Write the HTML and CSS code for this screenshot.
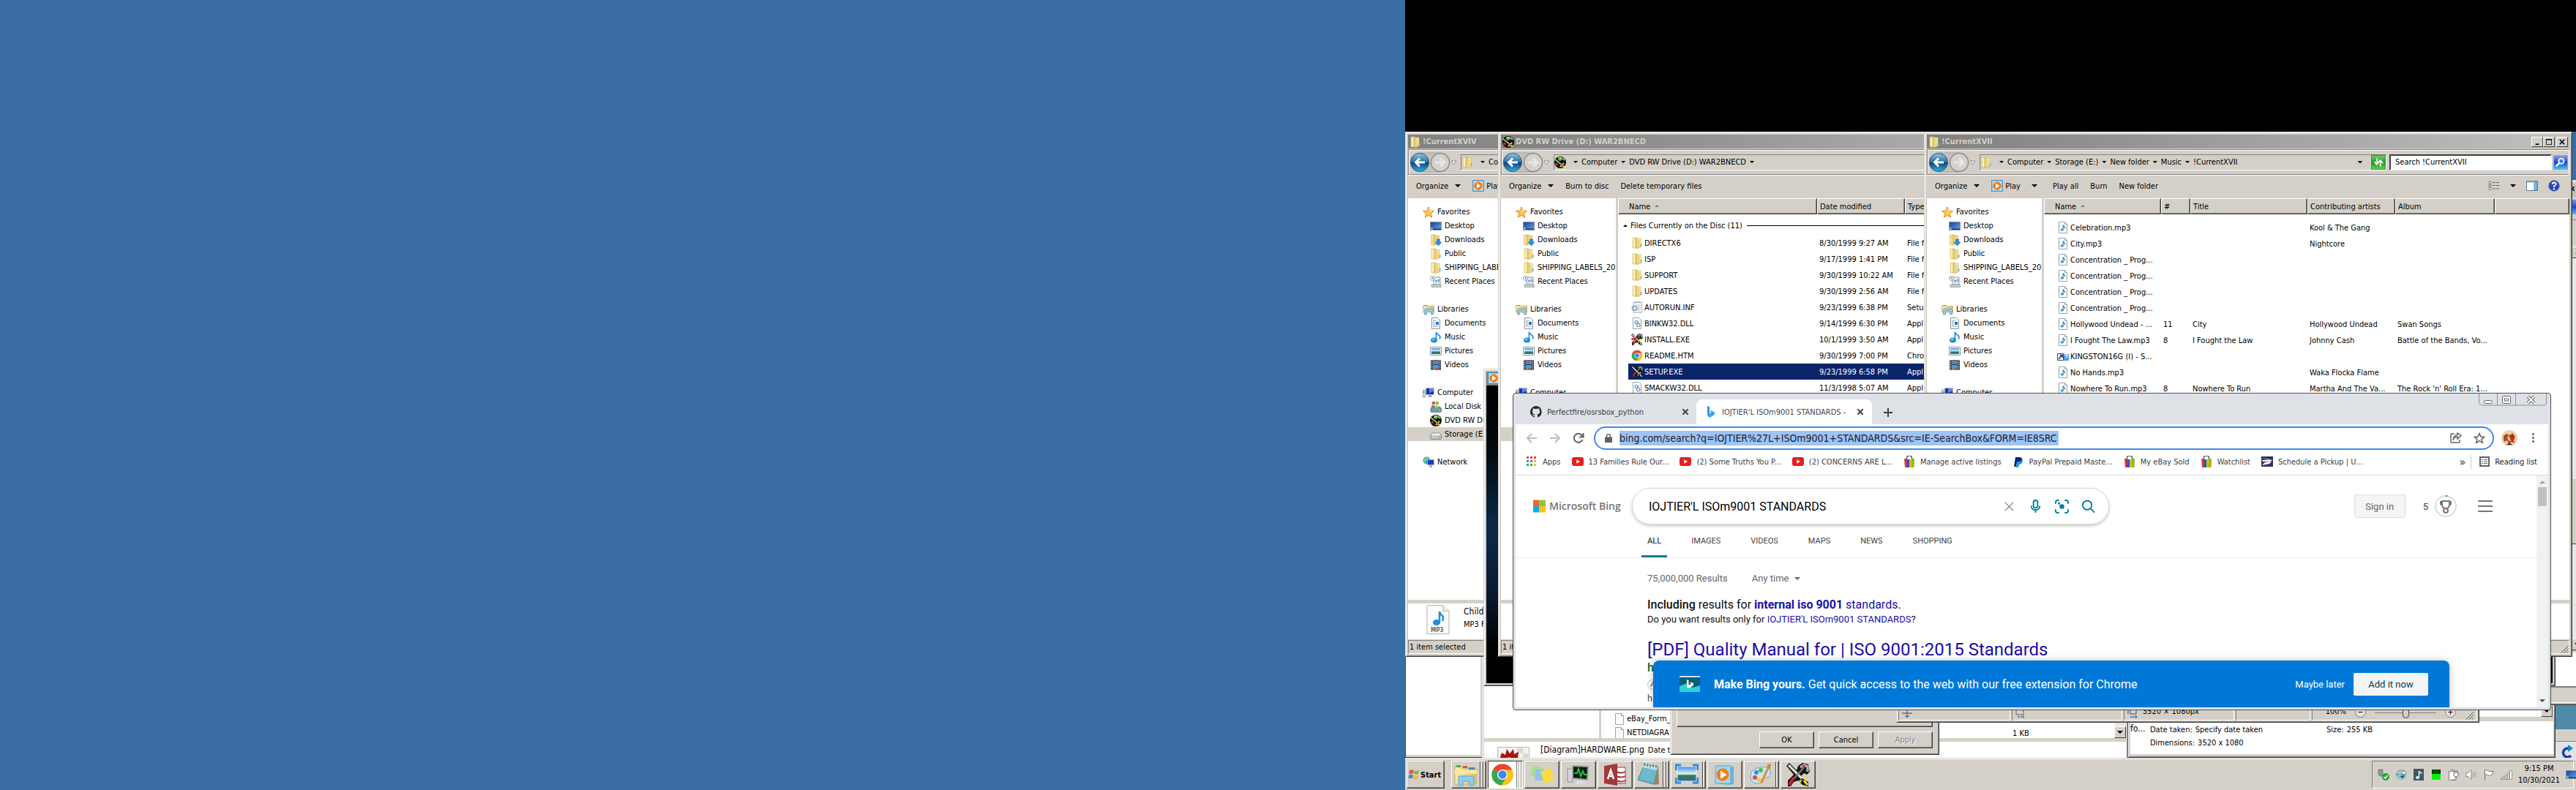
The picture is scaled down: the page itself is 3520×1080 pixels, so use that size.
FILE: index.html
```html
<!DOCTYPE html>
<html lang="en">
<head>
<meta charset="utf-8">
<title>Desktop</title>
<link rel="stylesheet" href="styles.css">
</head>
<body>
<svg class="sprite" aria-hidden="true">
  <defs>
    <linearGradient id="gFold" x1="0" x2="1"><stop offset="0" stop-color="#f8eba8"/><stop offset="1" stop-color="#dfc063"/></linearGradient>
    <linearGradient id="gBlue" x1="0" y1="0" x2="0" y2="1"><stop offset="0" stop-color="#8fc6e8"/><stop offset=".48" stop-color="#2f6fa3"/><stop offset=".5" stop-color="#0d3f70"/><stop offset="1" stop-color="#2fb4ea"/></linearGradient>
    <linearGradient id="gScr" x1="0" y1="0" x2="1" y2="1"><stop offset="0" stop-color="#123c9c"/><stop offset="1" stop-color="#6fa8ee"/></linearGradient>
    <linearGradient id="gSky" x1="0" y1="0" x2="0" y2="1"><stop offset="0" stop-color="#3b8ede"/><stop offset=".5" stop-color="#e6f4fb"/><stop offset=".6" stop-color="#3c7a4c"/><stop offset="1" stop-color="#2a6fa8"/></linearGradient>
  </defs>
  <symbol id="folder" viewBox="0 0 16 16"><path d="M2 1h6v14H2z" fill="url(#gFold)" stroke="#d2b45c" stroke-width=".6"/><path d="M7 2h6v12l-5 1.500H7z" fill="#ecd584" stroke="#cfae52" stroke-width=".6"/><path d="M4 2v12" stroke="#fffbe0" stroke-width="1.200"/><path d="M9 3h3v7" stroke="#f9efba" fill="none"/><path d="M13 9h1.500v4H13z" fill="#6db4e6"/></symbol>
  <symbol id="star" viewBox="0 0 16 16"><path d="M8 1l2 5 5.500.4-4.200 3.500 1.400 5.300L8 12.300l-4.700 2.900 1.400-5.300L.5 6.400 6 6z" fill="#fdc94a" stroke="#d9842b"/><path d="M8 3l1.300 3.800 3.700.3" stroke="#fff0a8" fill="none"/></symbol>
  <symbol id="desktop" viewBox="0 0 16 16"><path d="M.5 2.500h15v11H.5z" fill="url(#gScr)" stroke="#8793a0"/><path d="M1 11.500h14V13H1z" fill="#1e3f5c"/><circle cx="2.500" cy="11.500" r="1.500" fill="#8bd06a"/></symbol>
  <symbol id="download" viewBox="0 0 16 16"><path d="M1.500 1h6v14h-6z" fill="url(#gFold)" stroke="#d2b45c" stroke-width=".6"/><path d="M6.500 2h6v12h-6z" fill="#ecd584" stroke="#cfae52" stroke-width=".6"/><path d="M9.500 7h4v4H16l-4.500 5L7 11h2.500z" fill="#2d8fdf" stroke="#1a6bb5" stroke-width=".6"/></symbol>
  <symbol id="recent" viewBox="0 0 16 16"><path d="M5 2h9v10H5z" fill="#eef3f6" stroke="#8e979e"/><path d="M7 6h3v2H7zm4-1h2v3h-2zM7 9.500h4" fill="#5bb5e0" stroke="#8aa7b8" stroke-width=".5"/><path d="M2 12h13l1 3.500H2z" fill="#c7cbce" stroke="#8e979e" stroke-width=".7"/><circle cx="3.500" cy="3.500" r="3" fill="#fff" stroke="#8c959c"/><path d="M3.500 2v2H5" stroke="#3c6a8c" fill="none"/></symbol>
  <symbol id="library" viewBox="0 0 16 16"><path d="M.5 2.500h6l1 1h8V12H.5z" fill="url(#gFold)" stroke="#c9ab50" stroke-width=".8"/><path d="M2 2h4v1H2z" fill="#42b23e"/><path d="M2.500 15V9q0-2 2-2h8q2 0 2 2v6h-3v-4q0-1-1-1h-4q-1 0-1 1v4z" fill="#8fd0f1" stroke="#4693c4" stroke-width=".7"/></symbol>
  <symbol id="doc" viewBox="0 0 16 16"><path d="M2.500.5h8l3 3v12h-11z" fill="#fff" stroke="#8894a0"/><path d="M4 4h5M4 6h3M4 8h3M4 10h3M4 12h8" stroke="#8aa5c5"/><path d="M8 6h4v4H8z" fill="#2a6fc0"/></symbol>
  <symbol id="music" viewBox="0 0 16 16"><ellipse cx="5.500" cy="12" rx="4.500" ry="3.500" fill="#1f8fd5"/><path d="M8.500 12V1q1 3 4 4.500 2.500 2 .5 5" fill="none" stroke="#2c93d8" stroke-width="1.800"/><ellipse cx="4.500" cy="11" rx="2" ry="1.200" fill="#80c8f2"/></symbol>
  <symbol id="picture" viewBox="0 0 16 16"><path d="M.5 2.500h15v11H.5z" fill="#fff" stroke="#8894a0"/><path d="M2 4h12v8H2z" fill="url(#gSky)"/></symbol>
  <symbol id="video" viewBox="0 0 16 16"><path d="M1 1h14v14H1z" fill="#243038"/><path d="M4 1.500h8V7H4zM4 8h8v7H4z" fill="#4a9bdc"/><path d="M5 4l3-2 3 4H4zM6 12h6v3H8z" fill="#b06050"/><path d="M2.500 1v14M13.500 1v14" stroke="#e7edf0" stroke-width="1.500" stroke-dasharray="1.500 1.500"/></symbol>
  <symbol id="computer" viewBox="0 0 16 16"><path d="M.5 4h3v10h-3z" fill="#d8dde0" stroke="#82898e" stroke-width=".7"/><path d="M1.500 6v2" stroke="#3fc33f" stroke-width="1.500"/><path d="M4.500 1.500h11v9h-11z" fill="#1b34b8" stroke="#b8bdc4"/><path d="M9 2h6v4q-4 0-6 3z" fill="#5b86e8"/><path d="M8 11h4l1 3H7z" fill="#a4abb1"/></symbol>
  <symbol id="disk" viewBox="0 0 16 16"><path d="M1 10l2-2h10l2.500 2v4.500q0 1-1 1H2q-1 0-1-1z" fill="#6f9ca2" stroke="#54656a" stroke-width=".7"/><path d="M3 1h4v4H2.500z" fill="#e4572e"/><path d="M8 1h4l-.5 4H7.500z" fill="#7fba43"/><path d="M2.500 6h4L6 9.500H2z" fill="#3f8ddb"/><path d="M7.500 6h4L11 9.500H7z" fill="#f2b92c"/><path d="M12 13h2" stroke="#59e858" stroke-width="1.500"/></symbol>
  <symbol id="drive" viewBox="0 0 16 16"><path d="M1 9l2-3h10l2.500 3v4.500q0 1-1 1H2q-1 0-1-1z" fill="#c2c5c8" stroke="#6c7174" stroke-width=".8"/><path d="M3 6.500h10L14.500 9H2z" fill="#eef0f1"/><path d="M12 12h2" stroke="#49d447" stroke-width="1.500"/></symbol>
  <symbol id="network" viewBox="0 0 16 16"><circle cx="5.500" cy="5.500" r="5" fill="#2f9be0"/><path d="M2 3l4-2 2 2-4 3-1 3-2-2z" fill="#7fd06b"/><path d="M6.500 4.500h9v7h-9z" fill="#1b3ec0" stroke="#a9b0b8"/><path d="M9.500 12h3v3h-3z" fill="#98a0a8"/></symbol>
  <symbol id="war" viewBox="0 0 16 16"><path d="M0 2l2-2 5 5 1-3 3-2 4 1 1 5-2 2-2-1-2 2 3 3 2 1 0 3-4-1-3-3-3 1-2 3H1v-4l4-4z" fill="#161616"/><path d="M1.500 1.500l10 10" stroke="#d8d8d8" stroke-width="1.600"/><path d="M9.500 3l2.500-1.500 2.500 1v3.500" stroke="#a8a8a8" stroke-width="1.800" fill="none"/><path d="M12 3L5 11" stroke="#777" stroke-width="1.200"/><circle cx="11.800" cy="2.300" r=".8" fill="#e02020"/><path d="M5 10l-3 5" stroke="#cf1f1f" stroke-width="2"/><path d="M9 13l4-4m-1 3l2.500 3" stroke="#f0e02c" stroke-width="1.500"/><circle cx="10.800" cy="11.500" r="1" fill="#2336d8"/></symbol>
  <symbol id="wardisc" viewBox="0 0 16 16"><circle cx="8" cy="8" r="8" fill="#111"/><path d="M5 1l5 0 1 3-3 2-3-1z" fill="#3fc83a"/><path d="M6 1h4l-1 3z" fill="#e8e22b"/><path d="M11 2l3 3" stroke="#aaa" stroke-width="2"/><path d="M1 4l10 8" stroke="#ddd" stroke-width="1.500"/><path d="M1 10l3-2 1 3-3 2z" fill="#d62a2a"/><path d="M8 14l5-5m-2 4l3 1" stroke="#f0e02c" stroke-width="2"/><circle cx="10.500" cy="11.500" r="1" fill="#2336d8"/></symbol>
  <symbol id="install" viewBox="0 0 16 16"><use href="#war"/><path d="M0 6h4V3l4 4.500L4 12V9H0z" fill="#e21a1a" stroke="#fff" stroke-width=".5"/></symbol>
  <symbol id="inf" viewBox="0 0 16 16"><path d="M3 1.500h11.500v14H3z" fill="#f3f6f8" stroke="#a3abb2" stroke-width=".8"/><path d="M5 0v2m2-2v2m2-2v2m2-2v2m2-2v2" stroke="#8a9299" stroke-width=".8"/><path d="M5 5h8M5 7h8M8 9h5M8 11h5M8 13h5" stroke="#b9c6d0" stroke-width=".8"/><circle cx="4.500" cy="9.500" r="3" fill="none" stroke="#6f91ae" stroke-width="2" stroke-dasharray="1.800 .7"/></symbol>
  <symbol id="dll" viewBox="0 0 16 16"><path d="M2.500.5h8l3 3v12h-11z" fill="#fff" stroke="#9aa2a8"/><circle cx="7" cy="6.500" r="2" fill="none" stroke="#4a7db0" stroke-width="1.500" stroke-dasharray="1.200 .5"/><circle cx="9.500" cy="10.500" r="2.200" fill="none" stroke="#4a7db0" stroke-width="1.500" stroke-dasharray="1.200 .5"/></symbol>
  <symbol id="file" viewBox="0 0 16 16"><path d="M2.500.5h8l3 3v12h-11z" fill="#fafafa" stroke="#9aa2a8"/><path d="M10.500.5v3h3" fill="none" stroke="#9aa2a8"/></symbol>
  <symbol id="mp3" viewBox="0 0 16 16"><path d="M2.500.5h8l3 3v12h-11z" fill="#fff" stroke="#9aa2a8"/><path d="M10.500.5v3h3" fill="none" stroke="#9aa2a8"/><ellipse cx="6.700" cy="11" rx="2" ry="1.600" fill="#1f8fd5"/><path d="M8.200 11V4.500q.5 2 2 2.500.8 1 0 2.500" fill="none" stroke="#1f8fd5" stroke-width="1.300"/></symbol>
  <symbol id="shortcut" viewBox="0 0 16 16"><path d="M.5 4.500h8v9h-8z" fill="#fff" stroke="#444"/><path d="M2 12l4-5M3.500 6.500H7V10" stroke="#123a9c" stroke-width="1.600" fill="none"/><path d="M9 5h7v9H9z" fill="#5a96ea"/><path d="M10.500 7q2-2 3.500 0 .3 1.500-1.500 2.300v1" stroke="#fff" stroke-width="1.300" fill="none"/></symbol>
  <symbol id="play" viewBox="0 0 16 16"><path d="M.5.5h15v15H.5z" fill="#8cc4ea" stroke="#4d94c8"/><path d="M2 2h12v12H2z" fill="#cfe8f8"/><circle cx="8" cy="8" r="5.800" fill="#f27e12"/><path d="M6 4.500L11.500 8 6 11.500z" fill="#fff"/></symbol>
  <symbol id="chrome" viewBox="0 0 48 48"><circle cx="24" cy="24" r="22" fill="#fbc116"/><path d="M24 24L5 13A22 22 0 0 1 43 13z" fill="#ea4335"/><path d="M43 13H24v11z" fill="#ea4335"/><path d="M5 13a22 22 0 0 0 16.500 33L33 29l-9-5z" fill="#34a853"/><path d="M43.500 14H24l9.500 15L22 46A22 22 0 0 0 43.500 14z" fill="#fbc116"/><circle cx="24" cy="24" r="10.500" fill="#fff"/><circle cx="24" cy="24" r="8.500" fill="#4285f4"/></symbol>
  <symbol id="navbtn" viewBox="0 0 64 28"><path d="M14 1h28a13 13 0 0 1 0 26H14a13 13 0 0 1 0-26z" fill="#c4c1bb" stroke="#a8a59f"/><circle cx="14" cy="14" r="12.500" fill="url(#gBlue)" stroke="#33587c"/><path d="M21 14H9m5-5.500L8.500 14l5.500 5.500" stroke="#fff" stroke-width="3" fill="none"/><circle cx="42" cy="14" r="12.500" fill="#d4d2ce" stroke="#8f8e8b" stroke-width="1.500"/><path d="M35 14h12m-5-5.500l5.500 5.500-5.500 5.500" stroke="#e9e8e6" stroke-width="3" fill="none"/><path d="M57 12h7l-3.500 5z" fill="#eef0f5" stroke="#8b8fa0"/></symbol>
  <symbol id="ebay" viewBox="0 0 16 16"><path d="M4.500 6V3.500a3.500 3.500 0 0 1 7 0V6" fill="none" stroke="#333" stroke-width="1.200"/><path d="M1 4h4v12H2z" fill="#e53238"/><path d="M4.500 5H8v11H4.500z" fill="#0064d2"/><path d="M8 5h4v11H8z" fill="#f5af02"/><path d="M11.500 4h3.500l-.5 12h-3z" fill="#86b817"/></symbol>
  <symbol id="yt" viewBox="0 0 16 16"><rect y="2" width="16" height="12" rx="3" fill="#e41f1f"/><path d="M6.200 5.200L11 8l-4.800 2.800z" fill="#fff"/></symbol>
  <symbol id="winctl" viewBox="0 0 93 17"><path d="M.5 0v12q0 4 4 4h84q4 0 4-4V0M25.500 0v16M50.500 0v16" fill="none" stroke="#8d9094"/><rect x="7.500" y="9.500" width="11" height="4" rx="2" fill="#fff" stroke="#5d6166"/><rect x="32.500" y="3.500" width="11" height="10" rx="1" fill="#fff" stroke="#5d6166"/><rect x="35.500" y="7" width="5" height="3" fill="none" stroke="#5d6166"/><path d="M67 4l9 9m0-9l-9 9" stroke="#5d6166" stroke-width="4"/><path d="M67 4l9 9m0-9l-9 9" stroke="#fff" stroke-width="2"/></symbol>
  <symbol id="grip" viewBox="0 0 12 12"><path d="M1 12L12 1M5 12l7-7M9 12l3-3" stroke="#7d7a74" stroke-width="1.500"/><path d="M0 12L12 0M4 12l8-8M8 12l4-4" stroke="#fff" stroke-width=".6"/></symbol>
</svg>

<div class="screens">
<div class="left-screen"></div>
<div class="right-screen">
 <div class="workspace">

  <div class="strip"></div>

  <div class="win page-back"></div>
  <div class="win far-right"><div class="teal"></div><div class="band"></div><div class="foot"><svg width="18" height="20" viewBox="0 0 18 20"><path d="M13 5H9a6 6 0 1 0 5 10" fill="none" stroke="#1b3fae" stroke-width="3.500"/><path d="M10 0l7 5-7 5z" fill="#1483dc"/></svg></div></div>

  <section class="win files-back">
   <div class="fb-main"><div class="fb-nav"></div><ul class="fb-list"><li><svg><use href="#file"/></svg>eBay_Form_</li><li><svg><use href="#file"/></svg>NETDIAGRA</li></ul><span class="fb-size">1 KB</span><div class="sbar"><button class="sbtn" aria-label="Scroll down"><i class="tri"></i></button></div></div>
   <div class="fb-details"><svg class="thumb" viewBox="0 0 44 34"><path d="M.5.500h43V34H.5z" fill="#f4f4f4" stroke="#b5b5b5"/><path d="M27 2h8v7h-8zm8 7h7v7h-7z" fill="#d4dccb"/><path d="M3 18L6 8l5 3 2-8 4 6 5-6 1 7 6-3-1 8 4 4v15H3z" fill="#a31410"/><circle cx="16" cy="19" r="5" fill="#e09a1c"/></svg><span>[Diagram]HARDWARE.png</span><small>Date taken: Specify</small></div>
  </section>

  <section class="win info-back">
   <div class="ib-main"><div class="sbar"><button class="sbtn" aria-label="Scroll down"><i class="tri"></i></button></div></div>
   <dl class="ib-details"><div class="fo">fo...</div><div><div><dt>Date taken:</dt><dd>Specify date taken</dd></div><div><dt>Dimensions:</dt><dd>3520 x 1080</dd></div></div><div class="ib-size"><dt>Size:</dt><dd>255 KB</dd></div></dl>
  </section>

  <section class="win dialog">
   <div class="dlg-page"></div>
   <div class="dlg-buttons"><button>OK</button><button>Cancel</button><button disabled>Apply</button></div>
  </section>

  <section class="win paint">
   <div class="pt-status">
    <div class="pt-a"><svg width="14" height="16" viewBox="0 0 14 16"><path d="M7 0v15M0 9h14M4 12l3 3 3-3" stroke="#2c4a78" fill="none"/></svg></div>
    <div class="pt-b"><svg width="14" height="16" viewBox="0 0 14 16"><path d="M1 0v11h10V0M3 14h9m-2-2l2 2-2 2" stroke="#2c4a78" stroke-dasharray="3 1" fill="none"/></svg></div>
    <div class="pt-c"><svg width="14" height="16" viewBox="0 0 14 16"><path d="M4 1h8v9H4zM1 1v9M4 14h9m-2-2l2 2-2 2" stroke="#2c4a78" fill="none"/></svg><span>3520 × 1080px</span></div>
    <div class="pt-d"></div>
    <div class="pt-e"><span>100%</span><button class="round" aria-label="Zoom out">−</button><input type="range" aria-label="Zoom" value="50"><button class="round" aria-label="Zoom in">+</button><svg class="grip"><use href="#grip"/></svg></div>
   </div>
  </section>

  <section class="win side">
   <div class="side-top"><span class="close-bit">x</span></div>
   <div class="side-tools"><i></i></div>
   <div class="side-bar"></div>
   <div class="sbar"><button class="sbtn up" aria-label="Scroll up"><i class="tri up"></i></button><div class="sthumb"></div><button class="sbtn" aria-label="Scroll down"><i class="tri"></i></button></div>
   <div class="side-details"></div>
   <div class="side-status"></div>
  </section>

  <section class="win explorer ex-first">
   <header class="titlebar"><svg><use href="#folder"/></svg><h2>!CurrentXVIV</h2></header>
   <div class="addressbar"><svg class="navbtn"><use href="#navbtn"/></svg><div class="crumbs"><svg><use href="#folder"/></svg><button class="dd" aria-label="Path"></button><button>Computer</button></div></div>
   <div class="toolbar"><button>Organize<i class="tri"></i></button><button class="wplay"><svg><use href="#play"/></svg>Play</button></div>
   <div class="panes">
    <nav class="tree">
     <ul><li class="top"><svg><use href="#star"/></svg>Favorites</li><li><svg><use href="#desktop"/></svg>Desktop</li><li><svg><use href="#download"/></svg>Downloads</li><li><svg><use href="#folder"/></svg>Public</li><li><svg><use href="#folder"/></svg>SHIPPING_LABELS_20</li><li><svg><use href="#recent"/></svg>Recent Places</li></ul>
     <ul><li class="top"><svg><use href="#library"/></svg>Libraries</li><li><svg><use href="#doc"/></svg>Documents</li><li><svg><use href="#music"/></svg>Music</li><li><svg><use href="#picture"/></svg>Pictures</li><li><svg><use href="#video"/></svg>Videos</li></ul>
     <ul><li class="top"><svg><use href="#computer"/></svg>Computer</li><li><svg><use href="#disk"/></svg>Local Disk (C:)</li><li><svg><use href="#wardisc"/></svg>DVD RW Drive</li><li class="on"><svg><use href="#drive"/></svg>Storage (E:)</li></ul>
     <ul><li class="top"><svg><use href="#network"/></svg>Network</li></ul>
    </nav>
    <div class="list"></div>
   </div>
   <div class="details"><svg class="bigmp3" viewBox="0 0 32 40"><path d="M1 .5h22l8 8v31H1z" fill="#fcfcfc" stroke="#b0b0b0"/><path d="M23 .5v8h8" fill="#eee" stroke="#b0b0b0"/><ellipse cx="14" cy="24" rx="5" ry="4" fill="#1f8fd5"/><path d="M18 24V9q1 4 4 6 2 3 0 7" fill="none" stroke="#1f8fd5" stroke-width="2.500"/><text x="6" y="37" font-size="8" font-weight="700" fill="#666">MP3</text></svg><p><span>Children of</span><small>MP3 Format</small></p></div>
   <div class="status"><span>1 item selected</span></div>
  </section>

  <section class="win media"><header><svg><use href="#play"/></svg></header><div class="media-body"></div></section>

  <section class="win explorer ex-disc">
   <header class="titlebar"><svg><use href="#wardisc"/></svg><h2>DVD RW Drive (D:) WAR2BNECD</h2></header>
   <div class="addressbar"><svg class="navbtn"><use href="#navbtn"/></svg><div class="crumbs"><svg><use href="#wardisc"/></svg><button class="dd" aria-label="Path"></button><button>Computer</button><button class="dd" aria-label="Computer items"></button><button>DVD RW Drive (D:) WAR2BNECD</button><button class="dd" aria-label="Drive items"></button></div></div>
   <div class="toolbar"><button>Organize<i class="tri"></i></button><button>Burn to disc</button><button>Delete temporary files</button></div>
   <div class="panes">
    <nav class="tree">
     <ul><li class="top"><svg><use href="#star"/></svg>Favorites</li><li><svg><use href="#desktop"/></svg>Desktop</li><li><svg><use href="#download"/></svg>Downloads</li><li><svg><use href="#folder"/></svg>Public</li><li><svg><use href="#folder"/></svg>SHIPPING_LABELS_20</li><li><svg><use href="#recent"/></svg>Recent Places</li></ul>
     <ul><li class="top"><svg><use href="#library"/></svg>Libraries</li><li><svg><use href="#doc"/></svg>Documents</li><li><svg><use href="#music"/></svg>Music</li><li><svg><use href="#picture"/></svg>Pictures</li><li><svg><use href="#video"/></svg>Videos</li></ul>
     <ul><li class="top"><svg><use href="#computer"/></svg>Computer</li><li></li><li></li><li class="on"></li></ul>
    </nav>
    <div class="list">
     <table>
      <colgroup><col class="w272"><col class="w120"><col></colgroup>
      <thead><tr><th>Name<i class="tri up sort"></i></th><th>Date modified</th><th>Type</th></tr></thead>
      <tbody>
       <tr class="group"><td colspan="3"><div><i class="tri up"></i>Files Currently on the Disc (11)<hr></div></td></tr>
       <tr><td><svg><use href="#folder"/></svg>DIRECTX6</td><td>8/30/1999 9:27 AM</td><td>File f</td></tr>
       <tr><td><svg><use href="#folder"/></svg>ISP</td><td>9/17/1999 1:41 PM</td><td>File f</td></tr>
       <tr><td><svg><use href="#folder"/></svg>SUPPORT</td><td>9/30/1999 10:22 AM</td><td>File f</td></tr>
       <tr><td><svg><use href="#folder"/></svg>UPDATES</td><td>9/30/1999 2:56 AM</td><td>File f</td></tr>
       <tr><td><svg><use href="#inf"/></svg>AUTORUN.INF</td><td>9/23/1999 6:38 PM</td><td>Setu</td></tr>
       <tr><td><svg><use href="#dll"/></svg>BINKW32.DLL</td><td>9/14/1999 6:30 PM</td><td>Appl</td></tr>
       <tr><td><svg><use href="#install"/></svg>INSTALL.EXE</td><td>10/1/1999 3:50 AM</td><td>Appl</td></tr>
       <tr><td><svg><use href="#chrome"/></svg>README.HTM</td><td>9/30/1999 7:00 PM</td><td>Chro</td></tr>
       <tr class="selected"><td><svg><use href="#war"/></svg>SETUP.EXE</td><td>9/23/1999 6:58 PM</td><td>Appl</td></tr>
       <tr><td><svg><use href="#dll"/></svg>SMACKW32.DLL</td><td>11/3/1998 5:07 AM</td><td>Appl</td></tr>
      </tbody>
     </table>
    </div>
   </div>
   <div class="details"></div>
   <div class="status"><span>1 item selected</span></div>
  </section>

  <section class="win explorer ex-music">
   <header class="titlebar"><svg><use href="#folder"/></svg><h2>!CurrentXVII</h2><div class="caption"><button aria-label="Minimize"><svg viewBox="0 0 10 10"><path d="M2 8h6v2H2z"/></svg></button><button aria-label="Maximize"><svg viewBox="0 0 10 10"><path d="M0 0h10v10H0zM1 2v7h8V2z" fill-rule="evenodd"/></svg></button><button aria-label="Close"><svg viewBox="0 0 10 10"><path d="M1 1l8 8m0-8l-8 8" stroke="#000" stroke-width="2"/></svg></button></div></header>
   <div class="addressbar"><svg class="navbtn"><use href="#navbtn"/></svg><div class="crumbs"><svg><use href="#folder"/></svg><button class="dd" aria-label="Path"></button><button>Computer</button><button class="dd" aria-label="Computer items"></button><button>Storage (E:)</button><button class="dd" aria-label="Storage items"></button><button>New folder</button><button class="dd" aria-label="New folder items"></button><button>Music</button><button class="dd" aria-label="Music items"></button><button>!CurrentXVII</button><button class="dd last" aria-label="History"></button><button class="refresh" aria-label="Refresh"><svg viewBox="0 0 20 20"><path d="M8 4v7m-4-2l3.500 4L11 9M13 16V9m-4 2l4-4 4 4" stroke="#fff" stroke-width="2" fill="none"/></svg></button></div><input class="find" aria-label="Search" value="Search !CurrentXVII"><button class="findbtn" aria-label="Go"><svg viewBox="0 0 20 20"><circle cx="11" cy="8" r="4" fill="#3f7be0" stroke="#fff" stroke-width="2"/><path d="M8 11l-5 5" stroke="#fff" stroke-width="2.500"/></svg></button></div>
   <div class="toolbar"><button>Organize<i class="tri"></i></button><button class="wplay"><svg><use href="#play"/></svg>Play<i class="tri"></i></button><button>Play all</button><button>Burn</button><button>New folder</button><div class="views"><svg width="16" height="14" viewBox="0 0 16 14"><path d="M1 1h3v3H1zM1 5h3v3H1zM1 9.500h3v3H1z" fill="#fff" stroke="#6f8090"/><path d="M2 6h1v1H2z" fill="#d22"/><path d="M6 2.500h10M6 6.500h10M6 11h10" stroke="#5b6670" stroke-dasharray="4 1"/></svg><i class="tri"></i><svg width="16" height="14" viewBox="0 0 16 14"><path d="M.5.5h15v13H.5z" fill="#fff" stroke="#5680a5"/><path d="M0 2h10" stroke="#5680a5"/><path d="M11 1h4v12h-4z" fill="#6fc6e8" stroke="#5680a5"/></svg><svg width="16" height="16" viewBox="0 0 16 16"><circle cx="8" cy="8" r="7.500" fill="#2447b8" stroke="#8f97a8"/><path d="M5.500 6q.3-2.500 2.700-2.500T10.600 6Q10.500 7.300 8 8.200V10" stroke="#fff" stroke-width="1.800" fill="none"/><circle cx="8" cy="12.300" r="1.200" fill="#fff"/></svg></div></div>
   <div class="panes">
    <nav class="tree">
     <ul><li class="top"><svg><use href="#star"/></svg>Favorites</li><li><svg><use href="#desktop"/></svg>Desktop</li><li><svg><use href="#download"/></svg>Downloads</li><li><svg><use href="#folder"/></svg>Public</li><li><svg><use href="#folder"/></svg>SHIPPING_LABELS_20</li><li><svg><use href="#recent"/></svg>Recent Places</li></ul>
     <ul><li class="top"><svg><use href="#library"/></svg>Libraries</li><li><svg><use href="#doc"/></svg>Documents</li><li><svg><use href="#music"/></svg>Music</li><li><svg><use href="#picture"/></svg>Pictures</li><li><svg><use href="#video"/></svg>Videos</li></ul>
     <ul><li class="top"><svg><use href="#computer"/></svg>Computer</li></ul>
    </nav>
    <div class="list songs">
     <table>
      <colgroup><col class="w160"><col class="w40"><col class="w160"><col class="w120"><col class="w136"><col></colgroup>
      <thead><tr><th>Name<i class="tri up sort"></i></th><th>#</th><th>Title</th><th>Contributing artists</th><th>Album</th><th></th></tr></thead>
      <tbody>
       <tr class="pad"><td colspan="6"></td></tr>
       <tr><td><svg><use href="#mp3"/></svg>Celebration.mp3</td><td></td><td></td><td>Kool &amp; The Gang</td><td></td><td></td></tr>
       <tr><td><svg><use href="#mp3"/></svg>City.mp3</td><td></td><td></td><td>Nightcore</td><td></td><td></td></tr>
       <tr><td><svg><use href="#mp3"/></svg>Concentration _ Prog...</td><td></td><td></td><td></td><td></td><td></td></tr>
       <tr><td><svg><use href="#mp3"/></svg>Concentration _ Prog...</td><td></td><td></td><td></td><td></td><td></td></tr>
       <tr><td><svg><use href="#mp3"/></svg>Concentration _ Prog...</td><td></td><td></td><td></td><td></td><td></td></tr>
       <tr><td><svg><use href="#mp3"/></svg>Concentration _ Prog...</td><td></td><td></td><td></td><td></td><td></td></tr>
       <tr><td><svg><use href="#mp3"/></svg>Hollywood Undead - ...</td><td>11</td><td>City</td><td>Hollywood Undead</td><td>Swan Songs</td><td></td></tr>
       <tr><td><svg><use href="#mp3"/></svg>I Fought The Law.mp3</td><td>8</td><td>I Fought the Law</td><td>Johnny Cash</td><td>Battle of the Bands, Vo...</td><td></td></tr>
       <tr><td><svg><use href="#shortcut"/></svg>KINGSTON16G (I) - S...</td><td></td><td></td><td></td><td></td><td></td></tr>
       <tr><td><svg><use href="#mp3"/></svg>No Hands.mp3</td><td></td><td></td><td>Waka Flocka Flame</td><td></td><td></td></tr>
       <tr><td><svg><use href="#mp3"/></svg>Nowhere To Run.mp3</td><td>8</td><td>Nowhere To Run</td><td>Martha And The Va...</td><td>The Rock 'n' Roll Era: 1...</td><td></td></tr>
      </tbody>
     </table>
    </div>
   </div>
   <div class="details"></div>
   <div class="status"><span></span><svg class="grip"><use href="#grip"/></svg></div>
  </section>

  <section class="browser">
   <div class="tabstrip">
    <div class="tab"><svg width="16" height="16" viewBox="0 0 16 16"><path d="M8 0a8 8 0 0 0-2.500 15.600c.4.100.5-.2.500-.4v-1.500c-2.200.5-2.700-1-2.700-1-.4-.9-.9-1.200-.9-1.200-.7-.5.100-.5.100-.5.800.1 1.200.8 1.200.8.700 1.200 1.900.9 2.300.7.100-.5.300-.9.500-1.100-1.800-.2-3.600-.9-3.600-4 0-.9.300-1.600.8-2.100-.1-.2-.4-1 .1-2.100 0 0 .7-.2 2.200.8a7.500 7.500 0 0 1 4 0c1.500-1 2.200-.8 2.200-.8.400 1.100.2 1.900.1 2.100.5.600.8 1.300.8 2.100 0 3.100-1.900 3.700-3.700 3.900.3.300.6.800.6 1.500v2.200c0 .2.100.5.500.4A8 8 0 0 0 8 0z" fill="#24292e"/></svg><span>Perfectfire/osrsbox_python</span><button aria-label="Close tab"><svg viewBox="0 0 8 8"><path d="M0 0l8 8m0-8L0 8"/></svg></button></div>
    <div class="tab active"><svg width="16" height="16" viewBox="0 0 16 16"><path d="M3 0l3 1.200v9.500L3 13z" fill="#2b8ff0"/><path d="M3 13l3-2.300 2-1.200L6.800 6l5.200 2q1.500 1 1 3-.3 1-1.500 1.800L6 16z" fill="#2aa8f2"/></svg><span class="fade">IOJTIER'L ISOm9001 STANDARDS -</span><button aria-label="Close tab"><svg viewBox="0 0 8 8"><path d="M0 0l8 8m0-8L0 8"/></svg></button></div>
    <button class="newtab" aria-label="New tab"><svg viewBox="0 0 12 12"><path d="M6 0v12M0 6h12"/></svg></button>
    <svg class="winctl"><use href="#winctl"/></svg>
   </div>
   <div class="omnirow">
    <button class="nav off" aria-label="Back"><svg viewBox="0 0 16 16"><path d="M15 8H2m6-6L2 8l6 6"/></svg></button>
    <button class="nav off" aria-label="Forward"><svg viewBox="0 0 16 16"><path d="M1 8h13M8 2l6 6-6 6"/></svg></button>
    <button class="nav" aria-label="Reload"><svg viewBox="0 0 16 16"><path d="M13.500 10A6 6 0 1 1 12.500 4l1.500 1.500M14.500 1v5.500H9"/></svg></button>
    <div class="omnibox"><svg class="lock" viewBox="0 0 10 12"><path d="M0 4.500h10V12H0z" fill="#5f6368"/><path d="M2.500 5V3a2.500 2.500 0 0 1 5 0v2" fill="none" stroke="#5f6368" stroke-width="1.400"/></svg><input aria-label="Address" value="bing.com/search?q=IOJTIER%27L+ISOm9001+STANDARDS&amp;src=IE-SearchBox&amp;FORM=IE8SRC"><svg class="share" viewBox="0 0 16 16"><path d="M6 2H2q-1 0-1 1v10q0 1 1 1h10q1 0 1-1v-3M4 11q1-5 6-5V9l5-4.500L10 1v2.500Q5 4 4 11z"/></svg><svg class="bm" viewBox="0 0 16 16"><path d="M8 1.500l2 4.500 4.800.4-3.700 3.200 1.200 4.700L8 11.700l-4.300 2.600 1.200-4.700L1.200 6.400 6 6z"/></svg></div>
    <svg class="avatar" viewBox="0 0 22 22"><circle cx="11" cy="11" r="11" fill="#ecd2a4"/><path d="M3 8l4-3 5 2 3-3 4 5-2 5 1 4-4-2-4 3-2-5-4 2-1-4z" fill="#a8482a"/><path d="M6 10l4-3 2 5 4-2-1 4-4 1z" fill="#f0c090"/><path d="M7 8l2 2-2 2zM13 7l3 1-2 3z" fill="#7a2a14"/><path d="M12 12l4-3 1 4-3 2z" fill="#d8220f"/><path d="M7 20q4-4 8 0z" fill="#2b1b10"/></svg>
    <button class="dots" aria-label="Menu"><i></i><i></i><i></i></button>
   </div>
   <div class="bookmarks">
    <a href="#"><svg viewBox="0 0 16 16"><path d="M1 1h3v3H1zM6 1h3v3H6zM11 1h3v3h-3z" fill="#ea4335"/><path d="M1 6h3v3H1zM1 11h3v3H1z" fill="#34a853"/><path d="M6 6h3v3H6z" fill="#4285f4"/><path d="M11 6h3v3h-3zM11 11h3v3h-3z" fill="#fbbc05"/><path d="M6 11h3v3H6z" fill="#34a853"/></svg>Apps</a>
    <a href="#"><svg><use href="#yt"/></svg>13 Families Rule Our...</a>
    <a href="#"><svg><use href="#yt"/></svg>(2) Some Truths You P...</a>
    <a href="#"><svg><use href="#yt"/></svg>(2) CONCERNS ARE L...</a>
    <a href="#"><svg><use href="#ebay"/></svg>Manage active listings</a>
    <a href="#"><svg viewBox="0 0 16 16"><path d="M4 2h6q4 .5 3 4.500T8 10.500H6L5 15H2z" fill="#10296f"/><path d="M6 8h3q3 0 4.500-3Q15 11 9 12l-1 4H5z" fill="#1a9ce0"/></svg>PayPal Prepaid Maste...</a>
    <a href="#"><svg><use href="#ebay"/></svg>My eBay Sold</a>
    <a href="#"><svg><use href="#ebay"/></svg>Watchlist</a>
    <a href="#"><svg viewBox="0 0 16 16"><path d="M0 1h16v14H0z" fill="#333366"/><path d="M1 3l14 3-3 2-10 0-1-2h9zM1 13l4-4 9-1-3 3z" fill="#fff"/></svg>Schedule a Pickup | U...</a>
    <span class="more">»</span>
    <button class="reading"><svg viewBox="0 0 14 14"><path d="M1 1h12v12H1z" fill="none" stroke="#5f6368" stroke-width="2"/><path d="M3 4.500h2M6 4.500h5M3 7h2M6 7h5M3 9.500h2M6 9.500h5" stroke="#5f6368" stroke-width="1.200"/></svg>Reading list</button>
   </div>
   <div class="viewport">
    <main class="bing">
     <div class="bhead">
      <a class="logo" href="#"><svg viewBox="0 0 18 18"><path d="M0 0h9v9H0z" fill="#f26522"/><path d="M9 0h9v9H9z" fill="#8dc63f"/><path d="M0 9h9v9H0z" fill="#00aeef"/><path d="M9 9h9v9H9z" fill="#ffc20e"/></svg>Microsoft Bing</a>
      <form class="sbox"><input aria-label="Search the web" value="IOJTIER'L ISOm9001 STANDARDS"><svg viewBox="0 0 20 20"><path d="M4 4l12 12m0-12L4 16" stroke="#919191" stroke-width="1.500"/></svg><svg viewBox="0 0 20 20"><rect x="7" y="1" width="6" height="11" rx="3"/><path d="M4 9q0 6 6 6t6-6M10 15v4"/></svg><svg viewBox="0 0 20 20"><path d="M1 6V4q0-3 3-3h2M14 1h2q3 0 3 3v2M19 14v2q0 3-3 3h-2M6 19H4q-3 0-3-3v-2"/><circle cx="10" cy="10" r="2.500" fill="#00809d"/><circle cx="6" cy="5.500" r=".7" fill="#00809d"/></svg><svg viewBox="0 0 20 20"><circle cx="8.500" cy="8" r="6.500"/><path d="M13 12.500l6 6"/></svg></form>
      <div class="account"><button class="signin">Sign in</button><span>5</span><svg class="medal" viewBox="0 0 30 30"><circle cx="15" cy="15" r="14" fill="#fff" stroke="#dcdcdc" stroke-width="2"/><path d="M15 1h2" stroke="#00809d" stroke-width="2"/><path d="M10 8h10v5q0 4-5 6-5-2-5-6zM10 9H8v3q1 2 3 2M20 9h2v3q-1 2-3 2" fill="none" stroke="#767676" stroke-width="2"/><circle cx="15" cy="21" r="3" fill="#fff" stroke="#767676" stroke-width="2"/></svg><button class="burger" aria-label="Menu"><i></i><i></i><i></i></button></div>
     </div>
     <nav class="scopes"><a class="on" href="#">ALL</a><a href="#">IMAGES</a><a href="#">VIDEOS</a><a href="#">MAPS</a><a href="#">NEWS</a><a href="#">SHOPPING</a></nav>
     <div class="results">
      <p class="count"><span>75,000,000 Results</span><span>Any time<i class="tri"></i></span></p>
      <p class="incl"><b class="mid">Including</b> results for <a href="#"><b>internal iso 9001</b> standards</a>.</p>
      <p class="only">Do you want results only for <a href="#">IOJTIER'L ISOm9001 STANDARDS</a>?</p>
      <h3><a href="#">[PDF] Quality Manual for | ISO 9001:2015 Standards</a></h3>
      <p class="cite">h</p><p class="chip">A</p><p class="snip">h</p>
     </div>
     <aside class="banner"><svg viewBox="0 0 28 22"><path d="M0 0h28v22H0z" fill="#0b5f7c"/><path d="M0 0h28v2H0z" fill="#d7e3e8"/><path d="M0 14l10-4 8 6 10-3v9H0z" fill="#2ed0d4"/><path d="M10 5l2.500 1v7l3-2-1-2.500 4.500 1.500v3L12.500 17 10 15.500z" fill="#fff"/></svg><p><b>Make Bing yours.</b> Get quick access to the web with our free extension for Chrome</p><button class="later">Maybe later</button><button class="add">Add it now</button></aside>
    </main>
    <div class="vscroll"><i class="tri up"></i><div class="vthumb"></div><i class="tri dn"></i></div>
   </div>
  </section>
 </div>

 <footer class="taskbar">
  <button class="start"><svg viewBox="0 0 16 16"><path d="M2 2q3-1.500 5.500 0L7 7Q4.500 6 1.500 7z" fill="#e8562a"/><path d="M8.500 2.500Q11 4 15 2l-1 5q-3 1.500-6 0z" fill="#7fb842"/><path d="M1.300 8.500q3-1.500 5.500 0l-.8 5q-2.500-1.500-5.500 0z" fill="#3b87d8"/><path d="M7.800 9q3 1.500 6 0l-1 5q-3 1.500-6 0z" fill="#f6be2a"/></svg>Start</button>
  <div class="apps">
   <button class="app stack3" aria-label="Explorer"><svg viewBox="0 0 32 32"><path d="M1 5h9l2 2h18v22H1z" fill="url(#gFold)" stroke="#cfae52"/><path d="M3 3h6v3H3z" fill="#47b04b"/><path d="M12 4h6v3h-6z" fill="#e0523f"/><path d="M20 6h8v3h-8z" fill="#3e8ad6"/><path d="M1 10h30v5H1z" fill="#f7e9a6"/><path d="M6 31V20q0-2 2-2h17q2 0 2 2v11h-6v-6H12v6z" fill="#8ecff2" stroke="#5aa5d2"/></svg></button>
   <button class="app pressed" aria-label="Chrome"><svg><use href="#chrome"/></svg></button>
   <button class="app" aria-label="Sticky Notes"><svg viewBox="0 0 32 32"><path d="M4 3l13 4-4 14L0 17z" fill="#a6e08a"/><path d="M8 9h13v15H6z" fill="#8ec4ee"/><path d="M14 12l14-5 4 16-13 5z" fill="#fbdc3e"/></svg></button>
   <button class="app" aria-label="Resource Monitor"><svg viewBox="0 0 32 32"><path d="M1 8h7v18H1z" fill="#d3d6d8" stroke="#8c9194"/><path d="M8 4l21 1-1 18-20-2z" fill="#0a1c12" stroke="#9da2a5" stroke-width="2"/><path d="M10 14l4 0 2-6 3 10 3-7 2 5h4" fill="none" stroke="#22c33c" stroke-width="2"/><path d="M14 24h9l3 5H12z" fill="#d8dbdd"/></svg></button>
   <button class="app" aria-label="Access"><svg viewBox="0 0 32 32"><path d="M17 6h13v22H17z" fill="#fff" stroke="#a4373a"/><path d="M17 12q8 3 13 0M17 18q8 3 13 0M17 24q8 3 13 0" stroke="#a4373a" stroke-width="2" fill="none"/><path d="M1 4l18-3v30L1 28z" fill="#a4373a"/><path d="M6 22l4-12 4 12M7.500 18h5" stroke="#fff" stroke-width="2.500" fill="none"/></svg></button>
   <button class="app stack3" aria-label="Notepad"><svg viewBox="0 0 32 32"><path d="M10 2l19 3-6 24-22-6z" fill="#6eb9cb" stroke="#3f7d90"/><path d="M10 2l19 3-2 5-20-4z" fill="#b7dfe8"/><path d="M10 0v4m4-3v4m4-3v4m4-4v4m4-3v4" stroke="#555"/><path d="M29 5l1 24-7 1z" fill="#9a8560"/></svg></button>
   <button class="app stack1" aria-label="Pictures"><svg viewBox="0 0 32 32"><path d="M3 5h26v20H3z" fill="url(#gSky)" stroke="#e8eef2"/><path d="M1 10V3h7M24 3h7v7M31 20v7h-7M8 27H1v-7" fill="none" stroke="#2f8bd8" stroke-width="3"/></svg></button>
   <button class="app" aria-label="Media Player"><svg viewBox="0 0 32 32"><path d="M8 3l20 2v24l-4 1-18-1z" fill="#6db3d4"/><path d="M3 4h21v24H3z" fill="#a4d6ef" stroke="#68a9cc"/><circle cx="13" cy="16" r="8.500" fill="#f27e12"/><path d="M10 10.500l9 5.500-9 5.500z" fill="#fff"/></svg></button>
   <button class="app stack1" aria-label="Paint"><svg viewBox="0 0 32 32"><path d="M3 18Q3 8 16 6t14 6-6 8-7 8Q3 30 3 18z" fill="#c7e5f6" stroke="#6fa5c6"/><circle cx="9" cy="20" r="3" fill="#e2483c"/><circle cx="11" cy="13" r="3" fill="#3b88d8"/><circle cx="17" cy="10" r="3" fill="#58b848"/><circle cx="15" cy="23" r="3" fill="#f5ca36"/><path d="M18 27l8-18" stroke="#e38a2a" stroke-width="3"/><path d="M25 9l1-7 5-1-1 7z" fill="#c58f4a"/></svg></button>
   <button class="app" aria-label="Setup"><svg><use href="#war"/></svg></button>
  </div>
  <div class="tray">
   <svg viewBox="0 0 16 16"><path d="M1 1h6v9H3L1 8z" fill="#8e9599" stroke="#5f666a" stroke-width=".6"/><circle cx="11" cy="11" r="5" fill="#27a52f"/><path d="M8.500 11l2 2 3-4" stroke="#fff" stroke-width="1.500" fill="none"/></svg>
   <svg viewBox="0 0 16 16"><circle cx="8" cy="8" r="7.500" fill="#9cc3b8"/><path d="M2 9q2-7 9-5l1-2 3 5-5 1 0-2q-4-1-8 3z" fill="#fff" stroke="#2a6aa8" stroke-width=".8"/><path d="M6 10q4 0 6-2 1 4-2 5z" fill="#1d5c9e"/></svg>
   <svg viewBox="0 0 16 16"><path d="M1 0h14v16H1z" fill="#3c5a64"/><ellipse cx="6.500" cy="12" rx="2.500" ry="2" fill="#e8f0ee"/><path d="M8.500 12V3q1 3 4 3" stroke="#e8f0ee" stroke-width="1.500" fill="none"/></svg>
   <svg viewBox="0 0 16 16"><path d="M2 1h12v14H2z" fill="#0bef0b"/><path d="M2 1h12v6H2z" fill="#052605"/><path d="M2 3h12M2 5h12M5 1v6M8 1v6M11 1v6" stroke="#0a7a0a" stroke-width=".7"/></svg>
   <svg viewBox="0 0 16 16"><path d="M1.500 3.500h8v12h-8zM4 1h3v2" fill="#fff" stroke="#7b7b7b"/><path d="M8 5h6v4q-1 2-3 2t-3-2zM9.500 5V1.500M12.500 5V1.500M11 11v4H6" fill="#fff" stroke="#6b6b6b"/></svg>
   <svg viewBox="0 0 16 16"><path d="M1 5.500h3L8 1.500v13l-4-4H1z" fill="#fff" stroke="#858585"/><path d="M10 5q2 3 0 6M12 3.500q3.500 4.500 0 9" fill="none" stroke="#9a9a9a"/></svg>
   <svg viewBox="0 0 16 16"><path d="M2.500 1v15M2.500 2q3-1 5 1t7 0l-3 6q-3 1-5-.5t-4 0z" fill="#fff" stroke="#777"/></svg>
   <svg viewBox="0 0 16 16"><path d="M.5 12.500h2v2h-2zM3.500 10.500h2v4h-2zM6.500 8.500h2v6h-2zM9.500 5.500h2v9h-2zM12.500 2.500h3v12h-3z" fill="#fff" stroke="#808080" stroke-width=".8"/></svg>
   <time><span>9:15 PM</span><span>10/30/2021</span></time>
   <svg viewBox="0 0 16 16"><use href="#desktop"/></svg>
  </div>
 </footer>
</div>
</div>
</body>
</html>
```

FILE: styles.css
```css
:root {
  --face: #d4d0c8;
  --shade: #808080;
  --dark: #404040;
  --ui: "DejaVu Sans Condensed", "Noto Sans", sans-serif;
  --web: Roboto, "Liberation Sans", sans-serif;
}
* { box-sizing: border-box; }
body { margin: 0; font: 11px/19px var(--ui); color: #000; overflow: hidden; }
button, input { font: inherit; color: inherit; margin: 0; padding: 0; border: 0; background: none; }
ul, dl, dd, p, h2, h3 { margin: 0; padding: 0; list-style: none; font-size: inherit; font-weight: inherit; }
a { color: inherit; text-decoration: none; }
svg { flex: none; display: block; }
.sprite { position: absolute; width: 0; height: 0; }

.screens { display: grid; grid-template-columns: 6fr 5fr; height: 100vh; }
.left-screen { background: #3a6ea5; }
.right-screen { display: flex; flex-direction: column; min-width: 0; overflow: hidden; background: #3a6ea5; }
.workspace { flex: 1; position: relative; overflow: hidden; }
.strip { height: 180px; background: #000; }

.tri { display: inline-block; width: 0; height: 0; border: 4px solid transparent; border-top-color: #000; border-bottom-width: 0; }
.tri.up { border-width: 0 3px 3px; border-bottom-color: #000; }
.grip { width: 12px; height: 12px; }

/* window frames on the desktop canvas */
.win { position: absolute; overflow: hidden; background: var(--face); border: 1px solid; border-color: var(--face) var(--dark) var(--dark) var(--face); box-shadow: inset 1px 1px #fff, inset -1px -1px var(--shade); padding: 3px; display: flex; flex-direction: column; }
.page-back { left: 0; top: 600px; width: 108px; height: 436px; background: #fff; border-color: var(--dark); box-shadow: inset -4px -3px var(--face); }
.far-right { left: 1400px; right: -20px; top: 800px; bottom: -10px; padding: 0; }
.teal { height: 196px; background: #4f8aa8; }
.band { height: 17px; background: var(--face); border-bottom: 1px solid var(--shade); }
.foot { flex: 1; background: #dfe3e4; padding: 4px 0 0 178px; }

.files-back { left: 105px; width: 884px; top: 700px; bottom: -20px; background: var(--face); padding: 2px 3px 0 2px; }
.fb-main { height: 308px; display: flex; align-items: flex-end; background: #fff; }
.fb-nav { width: 160px; align-self: stretch; border-right: 3px solid var(--face); }
.fb-list { width: 562px; padding-left: 17px; line-height: 22px; }
.fb-list li { display: flex; align-items: center; gap: 2px; height: 22px; }
.fb-list li:last-child { height: 15px; overflow: hidden; }
.fb-list svg { width: 16px; height: 16px; }
.fb-size { line-height: 12px; flex: 1; }
.fb-details { flex: 1; margin-top: 5px; background: #fff; display: flex; gap: 5px; padding: 2px 0 0 18px; font-size: 12px; }
.fb-details .thumb { width: 44px; height: 34px; margin: 5px 10px 0 0; }
.fb-details small { font-size: 11px; }

.sbar { width: 16px; align-self: stretch; display: flex; flex-direction: column; justify-content: flex-end; background: repeating-conic-gradient(#fff 0 25%, var(--face) 0 50%) 0 0 / 2px 2px; }
.sbtn { height: 16px; flex: none; background: var(--face); border: 1px solid; border-color: #fff var(--dark) var(--dark) #fff; display: grid; place-items: center; }
.sthumb { height: 91px; background: var(--face); border: 1px solid; border-color: #fff var(--dark) var(--dark) #fff; }

.info-back { left: 987px; right: 28px; top: 700px; bottom: 0; padding: 0 2px 1px 3px; border-left-color: var(--dark); }
.ib-main { height: 279px; background: #fff; display: flex; justify-content: flex-end; padding-right: 1px; }
.ib-details { flex: 1; margin-top: 6px; background: #fff; border-bottom: 3px solid var(--face); display: flex; line-height: 18px; padding-top: 1px; }
.ib-details .fo { width: 27px; font-size: 12px; }
.ib-details div div { display: flex; gap: 4px; }
.ib-details > div:nth-child(2) { width: 241px; padding-top: 2px; }
.ib-size { display: flex; gap: 4px; padding-top: 2px; }

.dialog { left: 362px; width: 368px; top: 800px; height: 232px; padding: 2px 8px 8px; box-shadow: inset 1px 0 #fff, inset -1px -1px var(--shade); }
.dlg-page { flex: 1; border: 1px solid; border-color: #fff var(--dark) var(--dark) #fff; box-shadow: inset -1px -1px var(--shade); }
.dlg-buttons { display: flex; justify-content: flex-end; gap: 6px; padding-top: 6px; }
.dlg-buttons button { width: 75px; height: 23px; border: 1px solid; border-color: #fff var(--dark) var(--dark) #fff; box-shadow: inset -1px -1px var(--shade); }
.dlg-buttons button:disabled { color: var(--shade); text-shadow: 1px 1px #fff; }

.paint { left: 671px; width: 797px; top: 900px; height: 88px; justify-content: flex-end; padding: 2px; }
.pt-status { display: flex; gap: 2px; height: 24px; }
.pt-status > div { display: flex; align-items: flex-start; gap: 7px; padding: 4px 4px 0; border: 1px solid; border-color: var(--face) #fff #fff var(--shade); line-height: 14px; }
.pt-a { width: 156px; } .pt-b { width: 154px; } .pt-c { width: 154px; } .pt-d { width: 104px; }
.pt-status .pt-e { flex: 1; padding-left: 18px; gap: 12px; }
.pt-status .pt-e .grip { align-self: flex-end; margin-left: auto; }
.round { width: 15px; height: 15px; border: 1px solid var(--shade); border-radius: 50%; line-height: 10px; background: #e6e3dd; }
.pt-e input { width: 84px; height: 16px; appearance: none; background: linear-gradient(#808080, #808080) center / 100% 1px no-repeat; }
.pt-e input::-webkit-slider-thumb { appearance: none; width: 9px; height: 16px; background: var(--face); border: 1px solid var(--dark); border-radius: 0 0 5px 5px; }

.side { left: 1400px; right: -11px; top: 246px; height: 718px; padding: 4px 0 2px; }
.side-top { height: 18px; background: #c0c0c0; display: flex; justify-content: flex-end; flex: none; }
.close-bit { width: 18px; font-weight: 700; line-height: 14px; }
.side-tools { height: 32px; flex: none; display: flex; justify-content: flex-end; border-bottom: 1px solid var(--shade); padding-top: 4px; }
.side-tools i { width: 20px; height: 20px; background: linear-gradient(#6f95ec, #2446cf 50%, #4cc6f0); }
.side-bar { height: 36px; flex: none; }
.side .sbar { flex: none; align-self: flex-end; height: 549px; justify-content: flex-start; }
.side .sthumb { margin: 300px 0 129px; flex: none; }
.side-details { height: 46px; flex: none; margin-top: 6px; background: #fff; }
.side-status { flex: 1; border-top: 2px solid var(--shade); border-bottom: 1px solid #fff; }

/* file browser windows */
.explorer { top: 180px; height: 718px; }
.ex-first { left: 0; width: 886px; }
.ex-disc { left: 127px; width: 886px; }
.ex-music { left: 709px; right: 5px; }
.titlebar { flex: none; height: 19px; display: flex; align-items: center; gap: 2px; padding: 0 2px; margin: 0 0 1px; background: linear-gradient(90deg, #808080, #c0c0c0); color: var(--face); font-weight: 700; }
.titlebar > svg { width: 16px; height: 16px; }
.titlebar h2 { flex: 1; line-height: 18px; white-space: nowrap; }
.caption { display: flex; }
.caption button { width: 16px; height: 14px; display: grid; place-items: center; background: var(--face); border: 1px solid; border-color: #fff var(--dark) var(--dark) #fff; }
.caption button:last-child { margin-left: 2px; }
.caption svg { width: 8px; height: 8px; }
.addressbar { flex: none; height: 35px; display: flex; align-items: center; gap: 4px; padding: 0 1px; border: 1px solid; border-color: var(--shade) #fff var(--shade) var(--shade); box-shadow: inset 1px 1px #fff, 0 1px #fff; }
.navbtn { width: 64px; height: 28px; margin-right: 2px; }
.crumbs { flex: 1; height: 22px; display: flex; align-items: center; gap: 5px; padding-left: 0; border: 1px solid; border-color: var(--shade) #fff #fff var(--shade); white-space: nowrap; }
.crumbs > svg { width: 16px; height: 16px; margin-right: 5px; }
.dd { width: 6px; height: 3px; background: #000; clip-path: polygon(0 0, 100% 0, 50% 100%); }
.dd.last { margin-left: auto; width: 8px; height: 4px; margin-right: 6px; }
.refresh { width: 20px; height: 20px; background: linear-gradient(#74c96e, #1c9a1c 50%, #58d24c); border: 1px solid #4d8a4a; }
.find { width: 222px; height: 22px; padding-left: 6px; background: #fff; border: 2px solid; border-color: var(--dark) #fff #fff var(--dark); }
.findbtn { width: 20px; height: 20px; margin-left: -2px; background: linear-gradient(#7c9ff0, #1f43c8 50%, #3fc4f2); border: 1px solid #90a8d8; }
.toolbar { flex: none; height: 31px; display: flex; align-items: center; gap: 16px; padding: 0 13px 3px 11px; margin-top: 1px; white-space: nowrap; }
.toolbar button { display: flex; align-items: center; gap: 9px; }
.toolbar .wplay { gap: 3px; }
.toolbar .wplay .tri { margin: 0 5px 0 12px; }
.toolbar svg { width: 16px; height: 16px; }
.views { margin-left: auto; display: flex; align-items: center; gap: 14px; }
.panes { flex: 1; min-height: 0; display: flex; background: #fff; }
.tree { width: 160px; flex: none; border-right: 3px solid var(--face); padding-top: 9px; overflow: hidden; white-space: nowrap; }
.tree ul { margin-bottom: 19px; }
.tree li { height: 19px; display: flex; align-items: center; gap: 4px; padding-left: 30px; }
.tree li.top { padding-left: 20px; }
.tree li.on { background: var(--face); }
.tree svg { width: 16px; height: 16px; }
.list { flex: 1; min-width: 0; overflow: hidden; }
table { width: 100%; table-layout: fixed; border-collapse: separate; border-spacing: 0; }
th, td { padding: 0 0 0 3px; text-align: left; font-weight: 400; white-space: nowrap; overflow: hidden; }
th { height: 22px; background: var(--face); border: 1px solid; border-color: #fff var(--dark) var(--dark) #fff; box-shadow: inset -1px -1px var(--shade); }
th:first-child { padding-left: 14px; }
td { height: 22px; }
td:first-child { padding-left: 18px; }
td svg { width: 16px; height: 16px; display: inline-block; vertical-align: -4px; margin-right: 2px; }
.sort { margin-left: 6px; vertical-align: 3px; border-bottom-color: #808080 !important; }
.w272 { width: 272px; } .w120 { width: 120px; } .w160 { width: 160px; } .w40 { width: 40px; } .w136 { width: 136px; }
.pad td { height: 7px; }
.group td { height: 28px; padding: 3px 0 0 7px; }
.group td:first-child { padding-left: 7px; }
.group div { display: flex; align-items: center; gap: 4px; }
.group hr { flex: 1; border: 0; border-top: 1px solid #000; margin: 0 0 0 2px; }
.selected td { background: #0a246a; color: #fff; }
.selected td:first-child { background: linear-gradient(90deg, #fff 14px, #0a246a 14px); }
.details { flex: none; height: 54px; border-top: 5px solid var(--face); background: #fff; display: flex; padding: 2px 0 0 25px; }
.bigmp3 { width: 32px; height: 40px; margin-right: 19px; font-family: var(--ui); }
.details p { display: flex; flex-direction: column; font-size: 12px; line-height: 18px; }
.details small { font-size: 11px; }
.status { flex: none; height: 19px; margin-top: 1px; padding-left: 1px; line-height: 17px; border: 1px solid; border-color: var(--shade) #fff #fff var(--shade); display: flex; justify-content: space-between; align-items: flex-end; }

.media { left: 107px; right: 28px; top: 504px; height: 434px; }
.media header { flex: none; height: 19px; background: var(--shade); padding: 1px 2px; }
.media header svg { width: 16px; height: 16px; }
.media-body { flex: 1; background: linear-gradient(#000, #03080c 20%, #0b2a48 48%, #0b1a34 68%, #000 88%); }

/* web browser */
.browser { position: absolute; left: 147px; right: 34px; top: 537px; height: 434px; display: flex; flex-direction: column; border: 1px solid #4a4f55; border-radius: 4px; background: #dee1e6; padding: 0 3px 3px; color: #3c4043; overflow: hidden; }
.tabstrip { flex: none; height: 42px; display: flex; align-items: flex-end; }
.tab { height: 34px; width: 247px; display: flex; align-items: center; gap: 7px; padding: 0 11px 0 20px; }
.tab.active { width: 240px; background: #fff; border-radius: 8px 8px 0 0; padding: 0 12px; }
.tab span { flex: 1; white-space: nowrap; overflow: hidden; }
.tab.active span { color: #45494d; }
.tab button svg { width: 8px; height: 8px; stroke: #45494d; stroke-width: 2; }
.newtab { align-self: flex-end; margin: 0 0 10px 16px; }
.newtab svg { width: 12px; height: 12px; stroke: #3c4043; stroke-width: 2; }
.winctl { width: 93px; height: 17px; margin: 0 2px 25px auto; }
.omnirow { flex: none; height: 37px; display: flex; align-items: center; background: #fff; padding: 0 14px; }
.nav { width: 16px; height: 16px; margin-right: 16px; }
.nav svg { width: 16px; height: 16px; fill: none; stroke: #5f6368; stroke-width: 2; }
.nav.off svg { stroke: #babcbe; }
.omnibox { flex: 1; height: 32px; display: flex; align-items: center; border: 2px solid #4285f4; border-radius: 16px; padding: 0 10px 0 13px; margin-left: -3px; }
.lock { width: 10px; height: 12px; margin-right: 10px; }
.omnibox input { width: 600px; height: 20px; background: #9dc3f7; font-size: 14px; color: #202124; }
.share, .bm { width: 16px; height: 16px; fill: none; stroke: #5f6368; stroke-width: 1.500; }
.share { margin-left: auto; margin-right: 16px; }
.avatar { width: 22px; height: 22px; margin: 0 20px 0 10px; }
.dots { display: grid; gap: 2px; width: 4px; margin-right: 4px; }
.dots i { width: 3px; height: 3px; border-radius: 50%; background: #5f6368; }
.bookmarks { flex: none; height: 33px; display: flex; align-items: center; gap: 15px; background: #fff; border-bottom: 1px solid #d6d8db; padding: 0 15px 4px 14px; white-space: nowrap; color: #3c4043; }
.bookmarks a, .reading { display: flex; align-items: center; gap: 7px; }
.bookmarks svg { width: 16px; height: 16px; }
.more { margin-left: auto; font-size: 16px; }
.reading { border-left: 1px solid #c8cacd; padding-left: 11px; margin-left: -8px; color: #202124; }
.bookmarks .reading svg { width: 14px; height: 14px; }
.viewport { flex: 1; min-height: 0; display: flex; background: #fff; }
.bing { flex: 1; position: relative; overflow: hidden; font-family: var(--web); color: #111; }
.vscroll { width: 16px; background: #f1f1f1; display: flex; flex-direction: column; align-items: center; padding: 7px 0; }
.vscroll .tri.up { border-width: 0 4px 4px; border-bottom-color: #a3a3a3; }
.vscroll .dn { margin-top: auto; border-top-color: #505050; }
.vthumb { width: 12px; height: 26px; margin-top: 5px; background: #c1c1c1; }
.bhead { display: flex; align-items: center; padding: 17px 60px 0 24px; }
.logo { width: 135px; display: flex; align-items: center; gap: 5px; font: 600 14px/20px "Open Sans", sans-serif; color: #737373; white-space: nowrap; }
.logo svg { width: 17px; height: 18px; }
.sbox { width: 652px; height: 50px; display: flex; align-items: center; gap: 17px; padding: 0 18px 0 22px; border: 1px solid #d6d6d6; border-radius: 25px; box-shadow: 0 2px 4px rgba(0,0,0,.22); }
.sbox input { flex: 1; font-size: 16px; color: #000; }
.sbox svg { width: 19px; height: 19px; fill: none; stroke: #00809d; stroke-width: 2; }
.account { margin-left: auto; display: flex; align-items: center; font-size: 13px; color: #444; }
.signin { width: 70px; height: 32px; font-size: 13px; color: #666; background: #f5f5f5; border: 1px solid #ddd; border-radius: 2px; margin-right: 24px; }
.medal { width: 30px; height: 30px; margin: 0 29px 0 9px; }
.burger { display: grid; gap: 5px; width: 20px; }
.burger i { height: 2px; background: #767676; }
.scopes { height: 46px; display: flex; align-items: flex-end; gap: 25px; padding-left: 172px; border-bottom: 1px solid #ececec; font-size: 11px; color: #444; }
.scopes a { height: 32px; line-height: 19px; padding: 0 8px; border-bottom: 3px solid transparent; }
.scopes .on { border-color: #00809d; font-weight: 500; }
.results { padding: 18px 0 0 180px; }
.count { display: flex; gap: 33px; font-size: 13px; line-height: 20px; color: #666; }
.count .tri { margin-left: 8px; vertical-align: 2px; border-top-color: #666; }
.incl { margin-top: 15px; font-size: 16px; line-height: 22px; }
.incl a, .only a, h3 a { color: #1a0dab; }
.mid { font-weight: 500; }
.only { font-size: 13px; line-height: 20px; margin-top: -1px; }
.results h3 { margin-top: 16px; font-size: 24px; line-height: 30px; white-space: nowrap; }
.cite { color: #006d21; font-size: 16px; line-height: 20px; font-weight: 500; }
.chip { width: 24px; height: 14px; margin: 6px 0; border: 1px solid #bbb; border-radius: 7px; padding-left: 3px; font: italic 11px/12px var(--web); color: #555; }
.snip { font-size: 13px; line-height: 12px; color: #555; }
.banner { position: absolute; left: 188px; right: 119px; bottom: 0; height: 64px; display: flex; align-items: center; padding: 0 29px 0 36px; background: #0078d7; color: #fff; border-radius: 8px 8px 0 0; box-shadow: 0 0 10px rgba(0,0,0,.25); }
.banner svg { width: 28px; height: 22px; margin-right: 19px; }
.banner p { flex: 1; font-size: 16px; }
.later { font-size: 13px; margin-right: 12px; }
.add { width: 102px; height: 31px; background: #f5f5f5; color: #004050; font-size: 13px; border-radius: 2px; }

/* taskbar */
.taskbar { flex: none; height: 44px; display: flex; padding: 3px 3px 2px 2px; background: var(--face); border-top: 1px solid var(--face); box-shadow: inset 0 1px #fff; }
.taskbar button { background: var(--face); border: 1px solid; border-color: #fff var(--dark) var(--dark) #fff; box-shadow: inset -1px -1px var(--shade); }
.start { width: 52px; display: flex; align-items: center; gap: 1px; padding-left: 1px; font-weight: 700; }
.start svg { width: 16px; height: 16px; }
.apps { display: flex; gap: 2px; margin-left: 9px; }
.app { width: 48px; display: grid; place-items: center; }
.app svg { width: 32px; height: 32px; }
.taskbar .stack3 { padding-right: 8px; background: linear-gradient(90deg, var(--face) 38px, var(--dark) 38px 39px, #fff 39px 40px, var(--face) 40px 42px, var(--dark) 42px 43px, #fff 43px 44px, var(--face) 44px); }
.taskbar .stack1 { padding-right: 4px; background: linear-gradient(90deg, var(--face) 42px, var(--dark) 42px 43px, #fff 43px 44px, var(--face) 44px); }
.taskbar .pressed { padding-right: 8px; border-color: var(--dark) #fff #fff var(--dark); box-shadow: none; background: linear-gradient(90deg, #fff 38px, var(--shade) 38px 39px, #fff 39px 40px, var(--face) 40px 42px, #fff 42px 43px, var(--face) 43px); }
.tray { margin-left: auto; width: 276px; display: flex; align-items: center; gap: 8px; padding: 0 0 0 7px; border: 1px solid; border-color: var(--shade) #fff #fff var(--shade); }
.tray svg { width: 16px; height: 16px; }
.tray time { flex: 1; display: grid; line-height: 16px; text-align: center; }
```
